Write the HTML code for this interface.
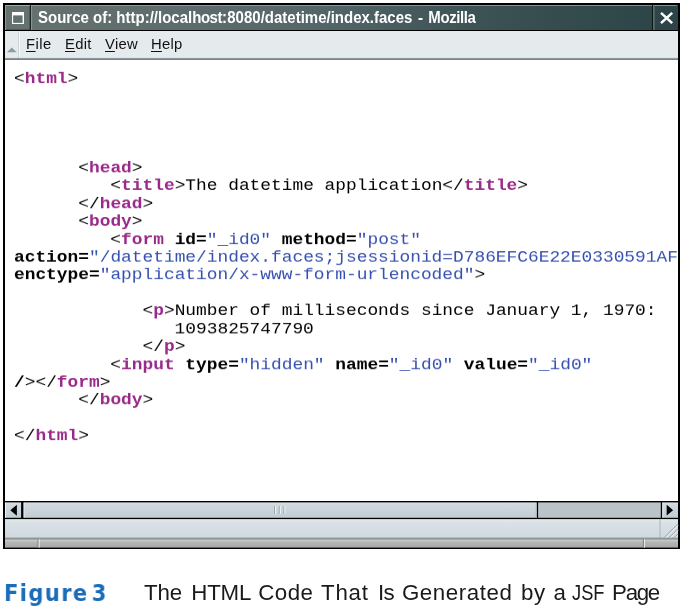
<!DOCTYPE html>
<html>
<head>
<meta charset="utf-8">
<title>Figure 3</title>
<style>
html,body{margin:0;padding:0;background:#fff;}
body{width:682px;height:611px;position:relative;overflow:hidden;font-family:"Liberation Sans",sans-serif;}
#chrome{position:absolute;left:0;top:0;width:682px;height:611px;display:block;}
.abs{position:absolute;white-space:pre;will-change:transform;}
#title{left:38.1px;top:7.8px;height:20px;line-height:20px;font-size:15px;font-weight:bold;color:#fff;letter-spacing:0px;transform:scaleY(1.05);transform-origin:0 15.6px;}
.menu{top:33.8px;height:20px;line-height:20px;font-size:14.8px;color:#111;}
.menu u{text-decoration:underline;text-decoration-thickness:1.2px;text-underline-offset:2.3px;}
#code{left:14.4px;top:69.8px;width:663.6px;overflow:hidden;margin:0;font-family:"Liberation Mono",monospace;font-size:17.85px;line-height:20.4px;color:#000;transform:scaleY(0.875);transform-origin:0 0;}
#code b.t{color:#9a2a8a;}
#code i{font-style:normal;color:#3650b0;}
#fig{left:3.7px;top:577.6px;height:30px;line-height:30px;font-family:"DejaVu Sans","Liberation Sans",sans-serif;font-size:23px;font-weight:bold;color:#1b6cb9;letter-spacing:1.55px;word-spacing:-5.9px;transform:scaleX(0.912);transform-origin:0 50%;}
#cap{left:0;top:578.2px;height:30px;width:682px;line-height:30px;font-size:22.3px;color:#1a1a1a;}
#cap span{position:absolute;top:0;white-space:pre;transform-origin:0 50%;}
</style>
</head>
<body>
<svg id="chrome" width="682" height="611" viewBox="0 0 682 611">
  <defs>
    <linearGradient id="tg" x1="0" y1="0" x2="1" y2="0">
      <stop offset="0" stop-color="#66726f"/>
      <stop offset="0.45" stop-color="#56676a"/>
      <stop offset="0.7" stop-color="#3c5254"/>
      <stop offset="1" stop-color="#2c4447"/>
    </linearGradient>
    <linearGradient id="thg" x1="0" y1="0" x2="0" y2="1"><stop offset="0" stop-color="#dbe3e8"/><stop offset="0.15" stop-color="#d0d9df"/><stop offset="1" stop-color="#c2ccd3"/></linearGradient>
    <linearGradient id="stg" x1="0" y1="0" x2="0" y2="1"><stop offset="0" stop-color="#e3e9ed"/><stop offset="0.2" stop-color="#dae2e7"/><stop offset="1" stop-color="#cfd8de"/></linearGradient>
    <linearGradient id="bfg" x1="0" y1="0" x2="0" y2="1"><stop offset="0" stop-color="#cdcfcf"/><stop offset="0.4" stop-color="#b4b6b6"/><stop offset="1" stop-color="#a6a8a8"/></linearGradient>
  </defs>
  <!-- outer black frame -->
  <rect x="3" y="3" width="677" height="546" fill="#000"/>
  <!-- title bar -->
  <rect x="5" y="5" width="673" height="25" fill="url(#tg)"/>
  <!-- window-menu button -->
  <rect x="5" y="5" width="25" height="1" fill="#9caaa9"/>
  <rect x="5" y="5" width="1" height="25" fill="#8b9a99"/>
  <rect x="30" y="5" width="1.1" height="25" fill="#1c2424"/>
  <rect x="31.1" y="5" width="1" height="25" fill="#8b9a99"/>
  <rect x="31.1" y="5" width="621" height="1" fill="#9aabab" opacity="0.75"/>
  <rect x="12" y="12" width="12" height="12" fill="#fff"/>
  <rect x="13.1" y="15.4" width="9.5" height="7.5" fill="#64706f"/>
  <rect x="6" y="29" width="24" height="1" fill="#3a4444" opacity="0.6"/>
  <rect x="29" y="6" width="1" height="24" fill="#3a4444" opacity="0.6"/>
  <!-- close button -->
  <rect x="652" y="5" width="1.3" height="25" fill="#0c1414"/>
  <rect x="653.3" y="5" width="1.1" height="25" fill="#6f8686"/>
  <rect x="653.3" y="5" width="23.5" height="1" fill="#7f9494"/>
  <path d="M661 12.9 L672.2 23.2 M672.2 12.9 L661 23.2" stroke="#fff" stroke-width="2.5" fill="none"/>
  <!-- menu bar -->
  <rect x="5" y="31" width="673" height="27" fill="#e5eaec"/>
  <rect x="18" y="31" width="1" height="27" fill="#cfd6d9"/>
  <rect x="19" y="31" width="1" height="27" fill="#f4f7f8"/>
  <path d="M7 52.3 L11.8 47.6 L16.7 52.3 Z" fill="#8e9ca2"/>
  <rect x="5" y="57.9" width="673" height="1" fill="#a0abb1"/><rect x="5" y="58.9" width="673" height="1" fill="#84919a"/>
  <!-- content -->
  <rect x="5" y="60" width="673" height="441" fill="#fff"/>
  <!-- horizontal scrollbar -->
  <rect x="5" y="502.4" width="16.1" height="15.4" fill="url(#thg)"/>
  <rect x="23.6" y="502.4" width="513.2" height="15.4" fill="url(#thg)"/>
  <rect x="535.8" y="503.4" width="1" height="14.4" fill="#aab5bc"/>
  <rect x="23.6" y="502.6" width="1" height="15" fill="#e4eaee"/>
  <rect x="538.1" y="502.4" width="122.7" height="15.4" fill="#bac3c7"/>
  <rect x="662.3" y="502.4" width="15.7" height="15.4" fill="url(#thg)"/>
  <rect x="5" y="502.6" width="1" height="15" fill="#eef2f4"/><rect x="662.3" y="502.6" width="1" height="15" fill="#e6ecef"/>
  <path d="M10.3 510.3 L16.9 504.8 L16.9 515.8 Z" fill="#000"/>
  <path d="M673.1 510.2 L666.7 504.8 L666.7 515.6 Z" fill="#000"/>
  <g>
    <rect x="274.1" y="506" width="1" height="8" fill="#93a0a8"/><rect x="275.1" y="506" width="1" height="8" fill="#f2f6f8"/>
    <rect x="278.8" y="506" width="1" height="8" fill="#93a0a8"/><rect x="279.8" y="506" width="1" height="8" fill="#f2f6f8"/>
    <rect x="283.4" y="506" width="1" height="8" fill="#93a0a8"/><rect x="284.4" y="506" width="1" height="8" fill="#f2f6f8"/>
  </g>
  <!-- status bar -->
  <rect x="5" y="519.1" width="673" height="18.8" fill="url(#stg)"/>
  <rect x="659.5" y="519.1" width="1" height="18.8" fill="#aab6bb"/>
  <path d="M664.2 537.9 L678 524.1 M669.2 537.9 L678 529.1 M674.1 537.9 L678 534" stroke="#a3adb2" stroke-width="1.1" fill="none"/>
  <path d="M665.5 537.9 L678 525.4 M670.5 537.9 L678 530.4 M675.4 537.9 L678 535.3" stroke="#f3f6f8" stroke-width="1" fill="none"/>
  <!-- bottom frame -->
  <rect x="5" y="537.9" width="673" height="1.3" fill="#8d9395"/>
  <rect x="5" y="539.2" width="673" height="8.4" fill="url(#bfg)"/>
  <rect x="37.6" y="539.2" width="1" height="8.4" fill="#6f7474"/><rect x="38.6" y="539.2" width="1" height="8.4" fill="#f4f4f4"/>
  <rect x="642.9" y="539.2" width="1" height="8.4" fill="#6f7474"/><rect x="643.9" y="539.2" width="1" height="8.4" fill="#f4f4f4"/>
</svg>
<div id="title" class="abs">Source of: http://local<span style="letter-spacing:-0.45px">host:</span><span style="margin-left:0.7px">8080/datetime/index.faces</span><span style="margin-left:1.5px"> - </span><span style="margin-left:1.1px;letter-spacing:-0.4px">Mozilla</span></div>
<div class="abs menu" style="left:25.7px;letter-spacing:0.5px"><u>F</u>ile</div>
<div class="abs menu" style="left:64.9px;letter-spacing:0.3px"><u>E</u>dit</div>
<div class="abs menu" style="left:104.7px;letter-spacing:0.3px"><u>V</u>iew</div>
<div class="abs menu" style="left:151.3px;letter-spacing:0.25px"><u>H</u>elp</div>
<pre id="code" class="abs">&lt;<b class="t">html</b>&gt;




      &lt;<b class="t">head</b>&gt;
         &lt;<b class="t">title</b>&gt;The datetime application&lt;/<b class="t">title</b>&gt;
      &lt;/<b class="t">head</b>&gt;
      &lt;<b class="t">body</b>&gt;
         &lt;<b class="t">form</b> <b>id=</b><i>"_id0"</i> <b>method=</b><i>"post"</i>
<b>action=</b><i>"/datetime/index.faces;jsessionid=D786EFC6E22E0330591AF</i>
<b>enctype=</b><i>"application/x-www-form-urlencoded"</i>&gt;

            &lt;<b class="t">p</b>&gt;Number of milliseconds since January 1, 1970:
               1093825747790
            &lt;/<b class="t">p</b>&gt;
         &lt;<b class="t">input</b> <b>type=</b><i>"hidden"</i> <b>name=</b><i>"_id0"</i> <b>value=</b><i>"_id0"</i>
<b>/</b>&gt;&lt;/<b class="t">form</b>&gt;
      &lt;/<b class="t">body</b>&gt;

&lt;/<b class="t">html</b>&gt;</pre>
<div id="fig" class="abs">Figure 3</div>
<div id="cap" class="abs"><span style="left:143.9px;letter-spacing:-0.10px">The</span><span style="left:191.3px;letter-spacing:-0.20px">HTML</span><span style="left:258.3px;letter-spacing:0.43px">Code</span><span style="left:321.0px;letter-spacing:0.76px">That</span><span style="left:377.9px;letter-spacing:-0.50px">Is</span><span style="left:401.9px;letter-spacing:0.58px">Generated</span><span style="left:521.0px;letter-spacing:0.60px">by</span><span style="left:553.5px;letter-spacing:0.00px">a</span><span style="left:571.5px;letter-spacing:0.00px;transform:scaleX(0.82)">JSF</span><span style="left:612.1px;letter-spacing:-1.30px">Page</span></div>
</body>
</html>
